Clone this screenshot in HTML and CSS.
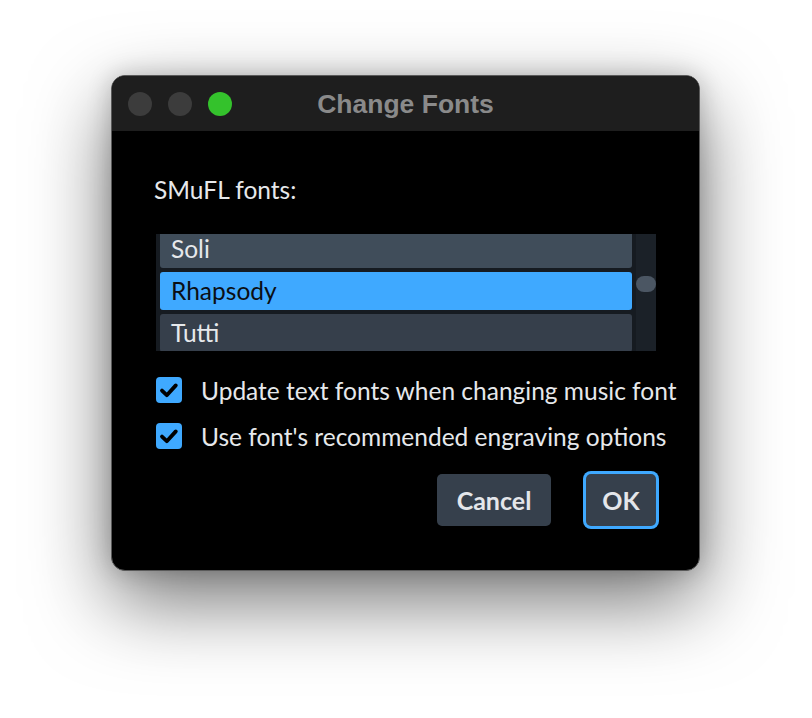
FILE: index.html
```html
<!DOCTYPE html>
<html lang="en">
<head>
  <meta charset="UTF-8" />
  <title>Change Fonts</title>
  <link rel="stylesheet" href="styles.css">
</head>
<body>
  <div class="window">
    <div class="titlebar">
      <div class="lights">
        <span class="light"></span>
        <span class="light"></span>
        <span class="light green"></span>
      </div>
      <div class="title">Change Fonts</div>
    </div>

    <div class="content">
      <div class="label">SMuFL fonts:</div>

      <div class="listbox">
        <div class="list">
          <div class="item">Soli</div>
          <div class="item selected">Rhapsody</div>
          <div class="item dim">Tutti</div>
        </div>
        <div class="scrollbar"><div class="thumb"></div></div>
      </div>

      <label class="check first">
        <span class="box">
          <svg width="26" height="26" viewBox="0 0 26 26"><path d="M6 13.6 L10.8 18.2 L19.8 8.4" fill="none" stroke="#000" stroke-width="3.8" stroke-linecap="round" stroke-linejoin="round"/></svg>
        </span>
        Update text fonts when changing music font
      </label>
      <label class="check">
        <span class="box">
          <svg width="26" height="26" viewBox="0 0 26 26"><path d="M6 13.6 L10.8 18.2 L19.8 8.4" fill="none" stroke="#000" stroke-width="3.8" stroke-linecap="round" stroke-linejoin="round"/></svg>
        </span>
        Use font's recommended engraving options
      </label>

      <div class="buttons">
        <button class="btn cancel">Cancel</button>
        <button class="btn ok">OK</button>
      </div>
    </div>
  </div>
</body>
</html>
```

FILE: styles.css
```css
html {
  background-color: #ffffff;
}
body {
  margin: 0;
  min-height: 100vh;
  box-sizing: border-box;
  padding: 75px 0 0 111px;
  background-color: #ffffff;
  font-family: Lato, 'Noto Sans', sans-serif;
  color: #e6e8eb;
}
.window {
  width: 587px;
  background-color: #000000;
  border: 1px solid #5a5a5a;
  border-radius: 14px;
  overflow: hidden;
  box-shadow: 0 30px 80px rgba(0, 0, 0, 0.55), 0 0 24px rgba(0, 0, 0, 0.2);
}
.titlebar {
  height: 55px;
  background-color: #1e1e1e;
  display: grid;
  grid-template-columns: 1fr auto 1fr;
  align-items: center;
}
.lights {
  display: flex;
  gap: 16px;
  padding-left: 16px;
}
.light {
  width: 24px;
  height: 24px;
  border-radius: 50%;
  background-color: #3c3c3c;
}
.light.green {
  background-color: #34c22c;
}
.title {
  font-family: 'Liberation Sans', Arial, sans-serif;
  font-weight: bold;
  font-size: 26.5px;
  color: #8a8a8a;
  padding-top: 1px;
}
.content {
  padding: 44px 43px 44px 44px;
  font-size: 24.5px;
}
.label {
  line-height: 30px;
  margin-left: -2px;
  margin-bottom: 29px;
}
.listbox {
  height: 117px;
  width: 500px;
  background-color: #161b21;
  display: flex;
  gap: 4px;
  padding-left: 4px;
  box-sizing: border-box;
  overflow: hidden;
}
.list {
  flex: 1;
  margin-top: -4px;
}
.item {
  height: 38px;
  line-height: 38px;
  margin-bottom: 4px;
  padding-left: 11px;
  border-radius: 3px;
  background-color: #404d5a;
}
.item.dim {
  background-color: #363f4b;
}
.item.selected {
  background-color: #3fa9ff;
  color: #0b0f14;
}
.scrollbar {
  width: 20px;
  background-color: #1b2128;
  padding-top: 42px;
}
.thumb {
  height: 16px;
  border-radius: 8px;
  background-color: #4b5663;
}
.check {
  display: flex;
  align-items: center;
  gap: 19px;
  height: 34px;
  margin-top: 12px;
  white-space: nowrap;
}
.check.first {
  margin-top: 22px;
}
.box {
  flex: none;
  width: 26px;
  height: 26px;
  border-radius: 4px;
  background-color: #3fa9ff;
  display: flex;
}
.buttons {
  display: flex;
  justify-content: flex-end;
  gap: 35px;
  margin-top: 21px;
}
.btn {
  height: 52px;
  border: none;
  border-radius: 5px;
  background-color: #36404c;
  color: #e4e6ea;
  font-family: Lato, 'Noto Sans', sans-serif;
  font-weight: bold;
  font-size: 25px;
}
.cancel {
  width: 114px;
}
.ok {
  width: 70px;
  box-shadow: 0 0 0 3px #3fa9ff;
}
```
